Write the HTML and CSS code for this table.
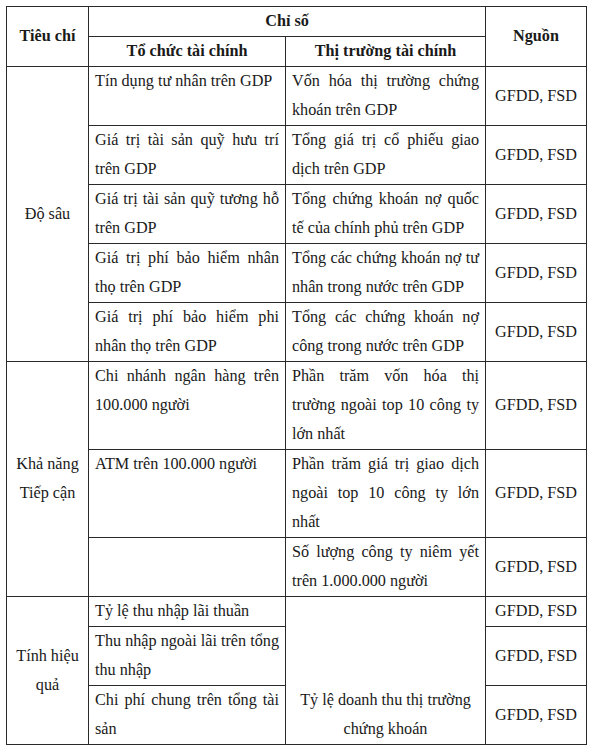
FILE: index.html
```html
<!DOCTYPE html>
<html lang="vi">
<head>
<meta charset="utf-8">
<title>Bảng chỉ số</title>
<link rel="stylesheet" href="styles.css">
</head>
<body>
<table class="tbl">
  <colgroup>
    <col class="c1">
    <col class="c2">
    <col class="c3">
    <col class="c4">
  </colgroup>
  <thead>
    <tr>
      <th rowspan="2">Tiêu chí</th>
      <th colspan="2">Chỉ số</th>
      <th rowspan="2">Nguồn</th>
    </tr>
    <tr>
      <th>Tổ chức tài chính</th>
      <th>Thị trường tài chính</th>
    </tr>
  </thead>
  <tbody>
    <tr>
      <td class="crit" rowspan="5">Độ sâu</td>
      <td class="txt">Tín dụng tư nhân trên GDP</td>
      <td class="txt">Vốn hóa thị trường chứng khoán trên GDP</td>
      <td class="src">GFDD, FSD</td>
    </tr>
    <tr>
      <td class="txt">Giá trị tài sản quỹ hưu trí trên GDP</td>
      <td class="txt">Tổng giá trị cổ phiếu giao dịch trên GDP</td>
      <td class="src">GFDD, FSD</td>
    </tr>
    <tr>
      <td class="txt">Giá trị tài sản quỹ tương hỗ trên GDP</td>
      <td class="txt">Tổng chứng khoán nợ quốc tế của chính phủ trên GDP</td>
      <td class="src">GFDD, FSD</td>
    </tr>
    <tr>
      <td class="txt">Giá trị phí bảo hiểm nhân thọ trên GDP</td>
      <td class="txt">Tổng các chứng khoán nợ tư nhân trong nước trên GDP</td>
      <td class="src">GFDD, FSD</td>
    </tr>
    <tr>
      <td class="txt">Giá trị phí bảo hiểm phi nhân thọ trên GDP</td>
      <td class="txt">Tổng các chứng khoán nợ công trong nước trên GDP</td>
      <td class="src">GFDD, FSD</td>
    </tr>
    <tr>
      <td class="crit" rowspan="3">Khả năng<br>Tiếp cận</td>
      <td class="txt">Chi nhánh ngân hàng trên 100.000 người</td>
      <td class="txt">Phần trăm vốn hóa thị trường ngoài top 10 công ty lớn nhất</td>
      <td class="src">GFDD, FSD</td>
    </tr>
    <tr>
      <td class="txt">ATM trên 100.000 người</td>
      <td class="txt">Phần trăm giá trị giao dịch ngoài top 10 công ty lớn nhất</td>
      <td class="src">GFDD, FSD</td>
    </tr>
    <tr>
      <td class="txt"></td>
      <td class="txt">Số lượng công ty niêm yết trên 1.000.000 người</td>
      <td class="src">GFDD, FSD</td>
    </tr>
    <tr>
      <td class="crit" rowspan="3">Tính hiệu<br>quả</td>
      <td class="txt">Tỷ lệ thu nhập lãi thuần</td>
      <td class="bottom" rowspan="3">Tỷ lệ doanh thu thị trường chứng khoán</td>
      <td class="src">GFDD, FSD</td>
    </tr>
    <tr>
      <td class="txt">Thu nhập ngoài lãi trên tổng thu nhập</td>
      <td class="src">GFDD, FSD</td>
    </tr>
    <tr>
      <td class="txt">Chi phí chung trên tổng tài sản</td>
      <td class="src">GFDD, FSD</td>
    </tr>
  </tbody>
</table>
</body>
</html>
```

FILE: styles.css
```css
html, body {
  margin: 0;
  padding: 0;
  background: #fff;
}
body {
  padding: 6px 0 0 6px;
  font-family: "Liberation Serif", "Times New Roman", serif;
  font-size: 16.2px;
  color: #1a1a1a;
}
.tbl {
  border-collapse: collapse;
  table-layout: fixed;
  width: 581px;
}
.c1 { width: 82px; }
.c2 { width: 197px; }
.c3 { width: 200px; }
.c4 { width: 101px; }
.tbl th,
.tbl td {
  border: 1px solid #2a2a2a;
  padding: 0 6px;
  line-height: 29px;
}
.tbl th {
  font-weight: bold;
  text-align: center;
  vertical-align: middle;
}
.crit {
  text-align: center;
  vertical-align: middle;
}
.txt {
  text-align: justify;
  vertical-align: top;
  padding-left: 8px;
}
.src {
  text-align: center;
  vertical-align: middle;
  white-space: nowrap;
}
.bottom {
  text-align: center;
  vertical-align: bottom;
}
```
